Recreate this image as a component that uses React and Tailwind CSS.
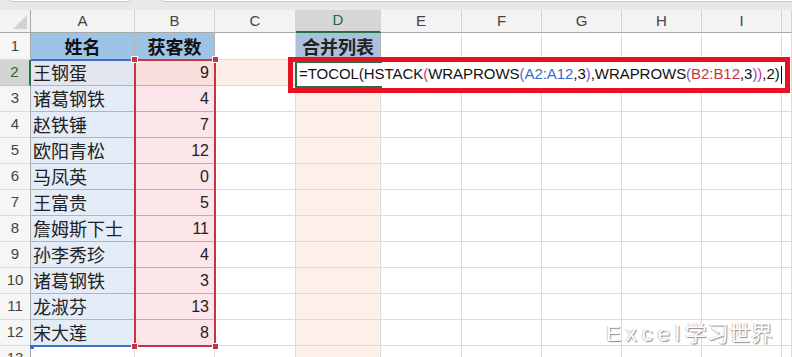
import React from 'react';

const cols = ['A', 'B', 'C', 'D', 'E', 'F', 'G', 'H', 'I', ''];

const people = [
  ['王钢蛋', 9],
  ['诸葛钢铁', 4],
  ['赵铁锤', 7],
  ['欧阳青松', 12],
  ['马凤英', 0],
  ['王富贵', 5],
  ['詹姆斯下士', 11],
  ['孙李秀珍', 4],
  ['诸葛钢铁', 3],
  ['龙淑芬', 13],
  ['宋大莲', 8],
];

const cjk = "font-['Noto_Sans_CJK_SC','Noto_Sans',sans-serif]";

const Handle = ({ className }) => (
  <div className={`absolute w-[7px] h-[7px] bg-[#c63441] border border-white ${className}`} />
);

const App = () => {
  const bodyRows = [];
  for (let r = 2; r <= 13; r++) {
    const p = people[r - 2];
    const active = r === 2;
    bodyRows.push(
      <React.Fragment key={r}>
        <div
          className={`h-[26px] flex items-center justify-center text-[15px] font-['Liberation_Sans',sans-serif] border-b ${
            active
              ? 'bg-[#d4d4d4] text-[#1d6b40] border-r-2 border-r-[#217346] border-b-[#c4c4c4]'
              : 'bg-[#f6f6f6] text-[#444] border-r border-r-[#a8a8a8] border-b-[#dcdcdc]'
          }`}
        >
          {r}
        </div>
        <div
          className={`h-[26px] flex items-center pl-[2px] text-[18px] text-[#222] ${cjk} ${
            p ? (active ? 'bg-[#e3e6ee] border-r border-b border-[#b4b4b4]' : 'bg-[#e4ecf7] border-r border-b border-[#b4b4b4]') : 'border-r border-b border-[#dcdcdc]'
          }`}
        >
          {p ? p[0] : ''}
        </div>
        <div
          className={`h-[26px] flex items-center justify-end pr-[5px] text-[16px] text-[#222] font-['Liberation_Sans',sans-serif] ${
            p ? (active ? 'bg-[#f9e0dc] border-r border-b border-[#b4b4b4]' : 'bg-[#fbe5e9] border-r border-b border-[#b4b4b4]') : 'border-r border-b border-[#dcdcdc]'
          }`}
        >
          {p ? p[1] : ''}
        </div>
        <div className={`h-[26px] border-r border-b border-[#dcdcdc] ${active ? 'bg-[#fdeee8]' : ''}`} />
        <div className="h-[26px] border-r border-b border-[#dcdcdc] bg-[#fdf0e9]" />
        {[0, 1, 2, 3, 4, 5].map((i) => (
          <div key={i} className="h-[26px] border-r border-b border-[#dcdcdc]" />
        ))}
      </React.Fragment>
    );
  }

  return (
    <div className="w-[792px] h-[357px] overflow-hidden bg-white">
      {/* toolbar strip */}
      <div className="h-[10px] bg-[#e8e8e8] relative">
        <div className="absolute left-[10px] top-[-4px] w-[120px] h-[6px] bg-white border border-[#c8c8c8] rounded-[2px]" />
        <div className="absolute left-[162px] top-[-4px] w-[640px] h-[6px] bg-white border border-[#c8c8c8] rounded-[2px]" />
      </div>

      <div className="relative">
        <div className="grid grid-cols-[31px_104px_80px_81px_85px_81px_80px_80px_80px_80px_1fr]">
          {/* column headers */}
          <div className="h-[23px] bg-[#f3f3f3] border-r border-b border-[#a8a8a8] relative">
            <svg className="absolute right-[3px] bottom-[3px]" width="14" height="14" viewBox="0 0 14 14">
              <polygon points="14,0 14,14 0,14" fill="#d2d2d2" />
            </svg>
          </div>
          {cols.map((c) => (
            <div
              key={c || 'J'}
              className={`h-[23px] flex items-center justify-center text-[15px] font-['Liberation_Sans',sans-serif] border-r border-r-[#d4d4d4] ${
                c === 'D'
                  ? 'bg-[#d6d6d6] text-[#1d6b40] border-b-2 border-b-[#217346]'
                  : 'bg-[#f3f3f3] text-[#444] border-b border-b-[#a8a8a8]'
              }`}
            >
              {c}
            </div>
          ))}

          {/* row 1 */}
          <div className="h-[27px] flex items-center justify-center text-[15px] text-[#444] font-['Liberation_Sans',sans-serif] bg-[#f6f6f6] border-r border-r-[#a8a8a8] border-b border-b-[#dcdcdc]">
            1
          </div>
          <div className={`h-[27px] flex items-center justify-center bg-[#9dc3e6] border-r border-b border-[#b4b4b4] text-[18px] font-bold text-[#111] ${cjk}`}>
            姓名
          </div>
          <div className={`h-[27px] flex items-center justify-center bg-[#9dc3e6] border-r border-b border-[#b4b4b4] text-[18px] font-bold text-[#111] ${cjk}`}>
            获客数
          </div>
          <div className="h-[27px] border-r border-b border-[#dcdcdc]" />
          <div className={`h-[27px] flex items-center justify-center bg-[#abc0da] border-r border-b border-[#b4b4b4] text-[18px] font-bold text-[#222] ${cjk}`}>
            合并列表
          </div>
          {[0, 1, 2, 3, 4, 5].map((i) => (
            <div key={i} className="h-[27px] border-r border-b border-[#dcdcdc]" />
          ))}

          {bodyRows}
        </div>

        {/* blue range A2:A12 */}
        <div className="absolute left-[31px] top-[49px] w-[104px] h-[2px] bg-[#3d6fc4]" />
        <div className="absolute left-[31px] top-[335px] w-[104px] h-[2px] bg-[#3d6fc4]" />
        <div className="absolute left-[30px] top-[335px] w-[4px] h-[4px] bg-[#3d6fc4]" />

        {/* red range B2:B12 */}
        <div className="absolute left-[134px] top-[49px] w-[82px] h-[288px] border-2 border-[#c63441]" />
        <Handle className="left-[131px] top-[46px]" />
        <Handle className="left-[212px] top-[46px]" />
        <Handle className="left-[131px] top-[333px]" />
        <Handle className="left-[212px] top-[333px]" />

        {/* in-cell editor */}
        <div className="absolute left-[295px] top-[51px] w-[488px] h-[27px] bg-white" />
        <div className="absolute left-[295px] top-[51px] w-[87px] h-[27px] border-l-2 border-t-2 border-b-2 border-[#217346]" />
        <div className="absolute left-[299px] top-[51px] h-[27px] flex items-center text-[15px] tracking-[-0.05px] text-[#111] font-['Liberation_Sans',sans-serif] whitespace-nowrap">
          <span>=TOCOL(HSTACK</span>
          <span className="text-[#e0307f]">(</span>
          <span>WRAPROWS</span>
          <span className="text-[#8a4fc7]">(</span>
          <span className="text-[#3a6cc4]">A2:A12</span>
          <span>,3</span>
          <span className="text-[#8a4fc7]">)</span>
          <span>,WRAPROWS</span>
          <span className="text-[#8a4fc7]">(</span>
          <span className="text-[#c63441]">B2:B12</span>
          <span>,3</span>
          <span className="text-[#8a4fc7]">)</span>
          <span className="text-[#e0307f]">)</span>
          <span>,2)</span>
          <span className="ml-[1px] w-[1px] h-[18px] bg-black" />
        </div>

        {/* annotation box */}
        <div className="absolute left-[288px] top-[47px] w-[502px] h-[36px] border-[5px] border-[#e81123]" />

        {/* watermark */}
        <div className={`absolute left-[606px] top-[305px] text-[22px] text-white whitespace-nowrap ${cjk} [text-shadow:1px_1px_1px_#8a8a8a,-1px_0_0_#d0d0d0]`}>
          <span className="tracking-[5px] font-['Liberation_Sans',sans-serif]">Excel</span>
          <span>学习世界</span>
        </div>
      </div>
    </div>
  );
};

export default App;
